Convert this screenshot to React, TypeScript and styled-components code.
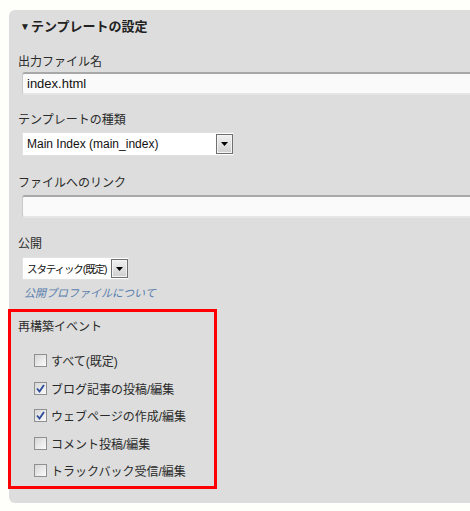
import React from "react";
import styled, { createGlobalStyle } from "styled-components";

const Global = createGlobalStyle`
  html, body {
    margin: 0;
    padding: 0;
    overflow: hidden;
    background: #fefefa;
  }
  body {
    font-family: "Liberation Sans", "Noto Sans CJK JP", sans-serif;
    font-size: 12px;
    color: #222;
  }
`;

const Panel = styled.div`
  margin: 10px 0 0 9px;
  width: 480px;
  background: #dcdddc;
  border-radius: 6px;
  padding: 0 0 14px 9px;
  box-sizing: border-box;
  display: flex;
  flex-direction: column;
`;

const Header = styled.div`
  padding-top: 8px;
  padding-left: 2px;
  font-size: 13px;
  font-weight: bold;
  line-height: 18px;
  color: #222;
`;

const Arrow = styled.span`
  font-size: 10px;
  margin-right: 1px;
  vertical-align: 1px;
`;

const Label = styled.div<{ $mt: number }>`
  margin-top: ${(p) => p.$mt}px;
  line-height: 16px;
  font-size: 12px;
  color: #2a2a2a;
`;

const TextInput = styled.div<{ $mt: number }>`
  margin-top: ${(p) => p.$mt}px;
  margin-left: 4px;
  width: 470px;
  height: 23px;
  box-sizing: border-box;
  background: #fafafa;
  border: 1px solid #c9c9c9;
  border-top: 2px solid #a8a8a8;
  border-bottom: 2px solid #e6e6e6;
  border-radius: 3px;
  padding: 0 4px;
  display: flex;
  align-items: center;
  font-size: 13px;
  color: #111;
`;

const Select = styled.div<{ $mt: number; $w: number; $h: number }>`
  margin-top: ${(p) => p.$mt}px;
  margin-left: 4px;
  width: ${(p) => p.$w}px;
  height: ${(p) => p.$h}px;
  box-sizing: border-box;
  background: #fff;
  border: 1px solid #e2e2e2;
  display: flex;
  align-items: stretch;
`;

const SelectText = styled.div<{ $fs: number; $ls: number }>`
  flex: 1;
  min-width: 0;
  display: flex;
  align-items: center;
  padding-left: 4px;
  font-size: ${(p) => p.$fs}px;
  letter-spacing: ${(p) => p.$ls}px;
  color: #111;
  white-space: nowrap;
`;

const SelectButton = styled.div`
  flex: 0 0 17px;
  margin: 1px 0 1px 0;
  box-sizing: border-box;
  border: 1px solid #6f6f6f;
  box-shadow: inset 0 0 0 1px #f4f4f4;
  background: linear-gradient(#f1f1f1, #cfcfcf);
  display: flex;
  align-items: center;
  justify-content: center;
`;

const LinkText = styled.a`
  margin-top: 6px;
  margin-left: 6px;
  font-size: 11px;
  line-height: 14px;
  font-style: italic;
  color: #5a80ae;
  text-decoration: none;
`;

const RedBox = styled.div`
  margin: 9px 0 0 -10px;
  width: 209px;
  height: 180px;
  box-sizing: border-box;
  border: 3px solid #ff0000;
  padding: 7px 0 0 7px;
  display: flex;
  flex-direction: column;
`;

const CheckList = styled.div`
  margin-top: 12px;
  padding-left: 16px;
  display: flex;
  flex-direction: column;
`;

const CheckRow = styled.label`
  height: 27.5px;
  display: flex;
  align-items: center;
  gap: 4px;
  font-size: 12px;
  color: #2a2a2a;
`;

const Box = styled.span`
  flex: 0 0 13px;
  width: 13px;
  height: 13px;
  box-sizing: border-box;
  border: 1px solid #8f9090;
  background: linear-gradient(135deg, #d6d6d6, #fbfbfb);
  display: flex;
  align-items: center;
  justify-content: center;
`;

const DropArrow = () => (
  <svg width="7" height="4" viewBox="0 0 7 4">
    <path d="M0 0H7L3.5 4Z" fill="#000" />
  </svg>
);

const Check = () => (
  <svg width="9" height="9" viewBox="0 0 9 9">
    <path d="M1 4.5L3.5 7.5L8 1" fill="none" stroke="#2b4a9a" strokeWidth="1.8" />
  </svg>
);

const events = [
  { label: "すべて(既定)", checked: false },
  { label: "ブログ記事の投稿/編集", checked: true },
  { label: "ウェブページの作成/編集", checked: true },
  { label: "コメント投稿/編集", checked: false },
  { label: "トラックバック受信/編集", checked: false },
];

export default function App() {
  return (
    <>
      <Global />
      <Panel>
        <Header>
          <Arrow>▼</Arrow>テンプレートの設定
        </Header>
        <Label $mt={18}>出力ファイル名</Label>
        <TextInput $mt={2}>index.html</TextInput>
        <Label $mt={17}>テンプレートの種類</Label>
        <Select $mt={4} $w={212} $h={24}>
          <SelectText $fs={12} $ls={0}>Main Index (main_index)</SelectText>
          <SelectButton>
            <DropArrow />
          </SelectButton>
        </Select>
        <Label $mt={19}>ファイルへのリンク</Label>
        <TextInput $mt={4} />
        <Label $mt={18}>公開</Label>
        <Select $mt={5} $w={107} $h={23}>
          <SelectText $fs={10.5} $ls={-1.1}>スタティック(既定)</SelectText>
          <SelectButton>
            <DropArrow />
          </SelectButton>
        </Select>
        <LinkText>公開プロファイルについて</LinkText>
        <RedBox>
          <Label $mt={0}>再構築イベント</Label>
          <CheckList>
            {events.map((e) => (
              <CheckRow key={e.label}>
                <Box>{e.checked && <Check />}</Box>
                {e.label}
              </CheckRow>
            ))}
          </CheckList>
        </RedBox>
      </Panel>
    </>
  );
}
